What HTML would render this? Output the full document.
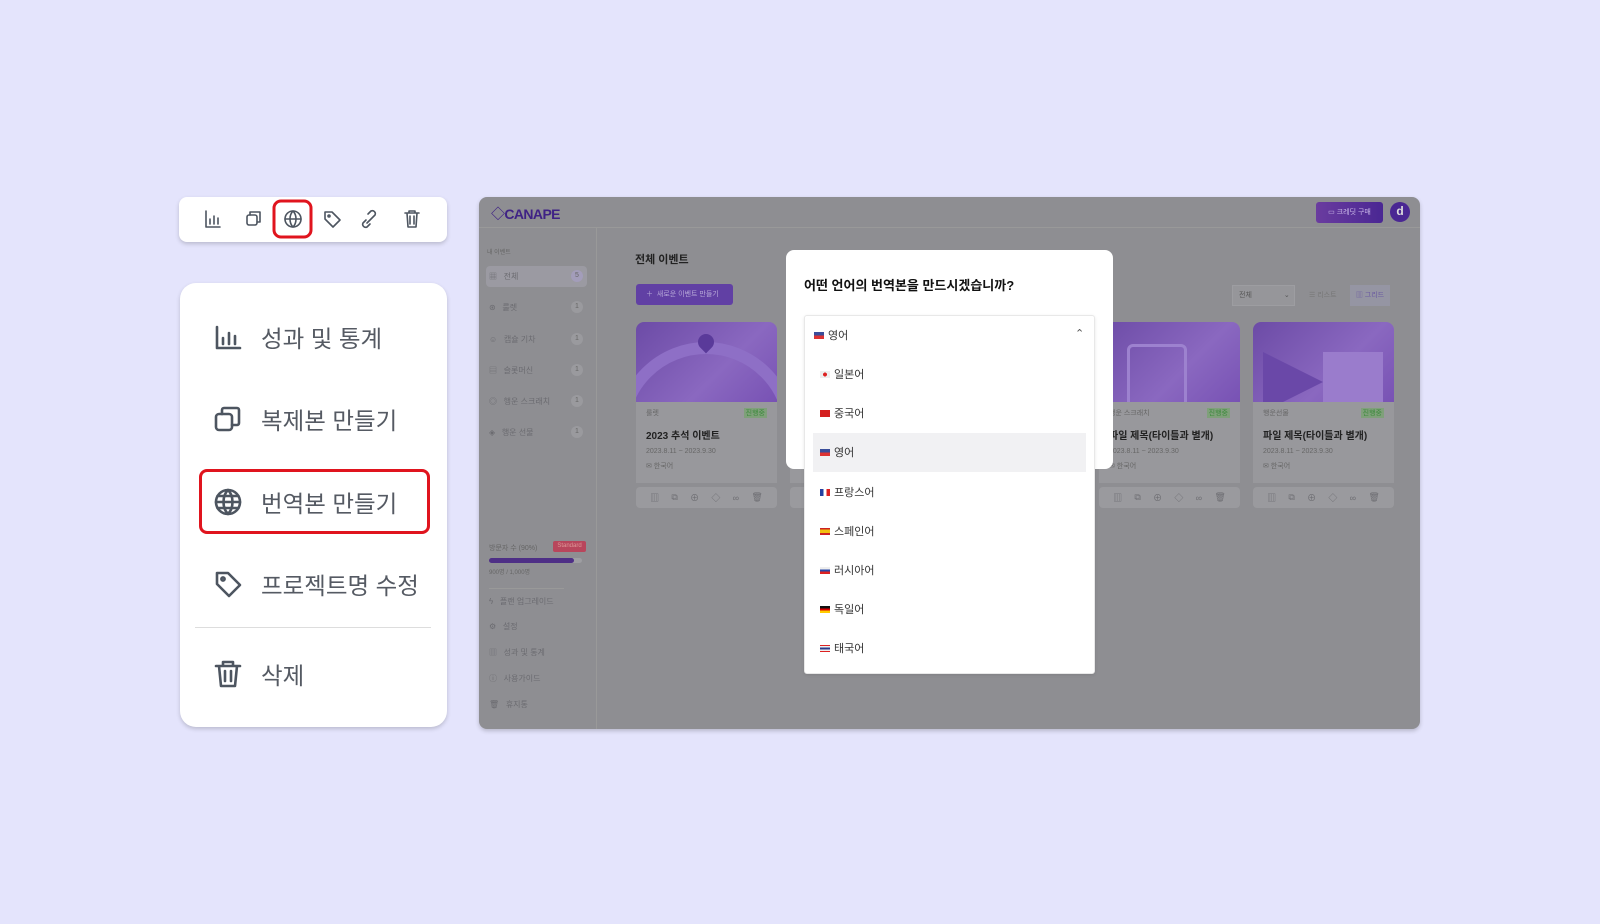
<!DOCTYPE html>
<html><head><meta charset="utf-8">
<style>
*{margin:0;padding:0;box-sizing:border-box}
body{width:1600px;height:924px;background:#e4e4fc;font-family:"Liberation Sans","Noto Sans CJK KR",sans-serif;position:relative;overflow:hidden}
.a{position:absolute}
.card{background:#fff;border-radius:8px;box-shadow:0 2px 4px rgba(0,0,0,.18)}
svg{display:block}
.mi{position:absolute;left:213px;font-size:23.5px;color:#555a63;display:flex;align-items:center}
.mi svg{margin-right:18px}
.st{stroke:#4d5560;fill:none;stroke-width:2.2;stroke-linecap:round;stroke-linejoin:round}
.sb{position:absolute;left:489px;font-size:8px;color:#6b6b70;display:flex;align-items:center}
.cnt{position:absolute;left:571px;width:12px;height:12px;border-radius:6px;background:#9a9a9e;font-size:7px;color:#666;text-align:center;line-height:12px}
.flag{display:inline-block;width:10px;height:7px;margin-right:4px;vertical-align:middle}
.opt{position:absolute;left:820px;font-size:11px;color:#333;display:flex;align-items:center}
.ev{position:absolute;width:141px;top:322px;height:186px}
.ev .img{height:80px;border-radius:8px 8px 0 0;background:linear-gradient(135deg,#6c4ba6,#8a68c0 60%,#7852b4);position:relative;overflow:hidden}
.ev .info{height:81px;background:#98989c;padding:6px 10px;font-size:7px;color:#666}
.ev .bar{margin-top:4px;height:21px;background:#9a9a9e;border-radius:4px;font-size:9px;color:#6d6d72;display:flex;justify-content:space-around;align-items:center;padding:0 8px}
</style></head><body>

<!-- small toolbar -->
<div class="a card" style="left:179px;top:197px;width:268px;height:45px"></div>
<svg class="a" style="left:179px;top:197px" width="268" height="45" viewBox="0 0 268 45">
 <g class="st" style="stroke-width:1.6">
  <path d="M27 14v16h14M31 27v-5M35 27v-8M39 27v-6"/>
  <rect x="68" y="18" width="10" height="10" rx="2"/><path d="M71 18v-3h10v10h-3"/>
  <circle cx="114" cy="22" r="8"/><path d="M106 22h16M114 14c-4 4-4 12 0 16M114 14c4 4 4 12 0 16"/>
  <path d="M146 15h7l8 8-7 7-8-8z"/><circle cx="150" cy="19" r="1"/>
  <path d="M187 23l-3 3a3 3 0 004 4l3-3M193 21l3-3a3 3 0 00-4-4l-3 3M188 26l6-6"/>
  <path d="M226 16h14M230 16v-2h6v2M228 16l1 14h8l1-14M231 19v8M235 19v8"/>
 </g>
 <rect x="95" y="4" width="37" height="36" rx="7" fill="none" stroke="#e0141e" stroke-width="3"/>
</svg>

<!-- big menu -->
<div class="a card" style="left:180px;top:283px;width:267px;height:444px;border-radius:16px"></div>
<div class="mi" style="top:320px"><svg width="30" height="30" viewBox="0 0 30 30"><g class="st" style="stroke-width:2.6"><path d="M4 5v21h23M10 22v-6M16 22v-11M22 22v-8"/></g></svg>성과 및 통계</div>
<div class="mi" style="top:402px"><svg width="30" height="30" viewBox="0 0 30 30"><g class="st" style="stroke-width:2.6"><rect x="3" y="10" width="16" height="16" rx="3"/><path d="M9 10V6a2 2 0 012-2h13a2 2 0 012 2v13a2 2 0 01-2 2h-5"/></g></svg>복제본 만들기</div>
<div class="mi" style="top:485px"><svg width="30" height="30" viewBox="0 0 30 30"><g class="st" style="stroke-width:2.6"><circle cx="15" cy="15" r="12"/><path d="M3 15h24M4.5 9h21M4.5 21h21M15 3c-6 6-6 18 0 24M15 3c6 6 6 18 0 24"/></g></svg>번역본 만들기</div>
<div class="mi" style="top:567px"><svg width="30" height="30" viewBox="0 0 30 30"><g class="st" style="stroke-width:2.6"><path d="M4 4h11l12 12-11 11L4 15z"/><circle cx="10" cy="10" r="1.6"/></g></svg>프로젝트명 수정</div>
<div class="a" style="left:195px;top:627px;width:236px;height:1px;background:#ddd"></div>
<div class="mi" style="top:657px"><svg width="30" height="30" viewBox="0 0 30 30"><g class="st" style="stroke-width:2.6"><path d="M3 7h24M10 7V3h10v4M6 7l2 20h14l2-20M12 12v10M18 12v10"/></g></svg>삭제</div>
<div class="a" style="left:199px;top:469px;width:231px;height:65px;border:3px solid #e0141e;border-radius:8px"></div>

<!-- app panel -->
<div class="a" style="left:479px;top:197px;width:941px;height:532px;background:#8e8e92;border-radius:8px;overflow:hidden;box-shadow:0 2px 4px rgba(0,0,0,.2)">
 <div class="a" style="left:0;top:0;width:941px;height:31px;border-bottom:1px solid #999"></div>
 <div class="a" style="left:12px;top:7px;font-size:14px;font-weight:bold;color:#3f2285;letter-spacing:-0.6px">◇CANAPE</div>
 <div class="a" style="left:837px;top:5px;width:67px;height:21px;border-radius:3px;background:linear-gradient(90deg,#6a3c9f,#4a2793);color:#c9b8e8;font-size:7px;line-height:21px;text-align:center">▭ 크레딧 구매</div>
 <div class="a" style="left:911px;top:5px;width:20px;height:20px;border-radius:10px;background:#4a2793;color:#ddd;font-size:12px;font-weight:bold;text-align:center;line-height:19px">d</div>
 <div class="a" style="left:117px;top:31px;width:1px;height:501px;background:#999"></div>
</div>
<!-- sidebar -->
<div class="a" style="left:487px;top:247px;font-size:6px;color:#666">내 이벤트</div>
<div class="a" style="left:486px;top:266px;width:101px;height:21px;background:#9b9aa2;border-radius:4px"></div>
<div class="sb" style="top:271px">▦&nbsp;&nbsp;&nbsp;전체</div><div class="cnt" style="top:270px;background:#a39dba">5</div>
<div class="sb" style="top:302px">⊛&nbsp;&nbsp;&nbsp;룰렛</div><div class="cnt" style="top:301px">1</div>
<div class="sb" style="top:334px">☺&nbsp;&nbsp;&nbsp;캡슐 기차</div><div class="cnt" style="top:333px">1</div>
<div class="sb" style="top:365px">▤&nbsp;&nbsp;&nbsp;슬롯머신</div><div class="cnt" style="top:364px">1</div>
<div class="sb" style="top:396px">◎&nbsp;&nbsp;&nbsp;행운 스크래치</div><div class="cnt" style="top:395px">1</div>
<div class="sb" style="top:427px">◈&nbsp;&nbsp;&nbsp;행운 선물</div><div class="cnt" style="top:426px">1</div>
<div class="a" style="left:489px;top:543px;font-size:7px;color:#666">방문자 수 (90%)</div>
<div class="a" style="left:553px;top:541px;width:33px;height:11px;background:#b8465c;border-radius:2px;font-size:6px;color:#d99;text-align:center;line-height:11px">Standard</div>
<div class="a" style="left:489px;top:558px;width:93px;height:5px;background:#9e9ea2;border-radius:3px"><div style="width:85px;height:5px;background:#4e2f86;border-radius:3px"></div></div>
<div class="a" style="left:489px;top:567px;font-size:6px;color:#666">900명 / 1,000명</div>
<div class="a" style="left:489px;top:588px;width:75px;height:1px;background:#999"></div>
<div class="sb" style="top:596px">ϟ&nbsp;&nbsp;&nbsp;플랜 업그레이드</div>
<div class="sb" style="top:621px">⚙&nbsp;&nbsp;&nbsp;설정</div>
<div class="sb" style="top:647px">▥&nbsp;&nbsp;&nbsp;성과 및 통계</div>
<div class="sb" style="top:673px">ⓘ&nbsp;&nbsp;&nbsp;사용가이드</div>
<div class="sb" style="top:699px">🗑&nbsp;&nbsp;&nbsp;휴지통</div>

<!-- main content -->
<div class="a" style="left:635px;top:251px;font-size:11px;color:#222;font-weight:bold">전체 이벤트</div>
<div class="a" style="left:636px;top:284px;width:97px;height:21px;background:#6140a4;border-radius:3px;color:#b7a8d8;font-size:7px;line-height:21px;padding-left:10px">＋&nbsp; 새로운 이벤트 만들기</div>
<div class="a" style="left:1232px;top:285px;width:63px;height:21px;background:#96969a;border:1px solid #9d9da1;font-size:7px;color:#555;line-height:19px;padding-left:6px">전체 <span style="margin-left:30px">⌄</span></div>
<div class="a" style="left:1309px;top:290px;font-size:7px;color:#777">☰ 리스트</div>
<div class="a" style="left:1350px;top:285px;width:40px;height:21px;background:#9595a3;font-size:7px;color:#6a5aa0;line-height:21px;text-align:center">▥ 그리드</div>

<div class="ev" style="left:636px"><div class="img"><div class="a" style="left:-20px;top:20px;width:180px;height:180px;border-radius:50%;border:12px solid #8e6fc6"></div><div class="a" style="left:62px;top:12px;width:16px;height:16px;border-radius:50% 50% 50% 0;transform:rotate(-45deg);background:#5a3a9a"></div></div><div class="info">룰렛<span style="float:right;background:#7fa07a;color:#3c8a3c;padding:0 2px">진행중</span><div style="font-size:10px;color:#222;font-weight:bold;margin-top:9px">2023 추석 이벤트</div><div style="margin-top:6px">2023.8.11 ~ 2023.9.30</div><div style="margin-top:6px">✉ 한국어</div></div><div class="bar"><span>▥</span><span>⧉</span><span>⊕</span><span>◇</span><span>∞</span><span>🗑</span></div></div>
<div class="ev" style="left:790px"><div class="img"></div><div class="info"></div><div class="bar"></div></div>
<div class="ev" style="left:1099px"><div class="img"><div class="a" style="left:28px;top:22px;width:60px;height:70px;border:3px solid #9d82cf;border-radius:6px"></div></div><div class="info">행운 스크래치<span style="float:right;background:#7fa07a;color:#3c8a3c;padding:0 2px">진행중</span><div style="font-size:10px;color:#222;font-weight:bold;margin-top:9px">파일 제목(타이틀과 별개)</div><div style="margin-top:6px">2023.8.11 ~ 2023.9.30</div><div style="margin-top:6px">✉ 한국어</div></div><div class="bar"><span>▥</span><span>⧉</span><span>⊕</span><span>◇</span><span>∞</span><span>🗑</span></div></div>
<div class="ev" style="left:1253px"><div class="img"><div class="a" style="left:10px;top:30px;width:0;height:0;border-left:60px solid #6a48a8;border-top:30px solid transparent;border-bottom:30px solid transparent"></div><div class="a" style="left:70px;top:30px;width:60px;height:50px;background:#9a7ccc"></div></div><div class="info">행운선물<span style="float:right;background:#7fa07a;color:#3c8a3c;padding:0 2px">진행중</span><div style="font-size:10px;color:#222;font-weight:bold;margin-top:9px">파일 제목(타이틀과 별개)</div><div style="margin-top:6px">2023.8.11 ~ 2023.9.30</div><div style="margin-top:6px">✉ 한국어</div></div><div class="bar"><span>▥</span><span>⧉</span><span>⊕</span><span>◇</span><span>∞</span><span>🗑</span></div></div>

<!-- modal -->
<div class="a" style="left:786px;top:250px;width:327px;height:219px;background:#fff;border-radius:8px"></div>
<div class="a" style="left:804px;top:275px;font-size:13px;font-weight:bold;color:#111">어떤 언어의 번역본을 만드시겠습니까?</div>
<div class="a" style="left:804px;top:315px;width:291px;height:359px;background:#fff;border:1px solid #e8e8e8;border-radius:3px;box-shadow:0 1px 3px rgba(0,0,0,.1)"></div>
<div class="a" style="left:813px;top:433px;width:273px;height:39px;background:#f1f1f3"></div>
<div class="opt" style="left:814px;top:327px"><span class="flag" style="background:linear-gradient(#3a4d9a 50%,#d33 50%)"></span>영어</div>
<div class="a" style="left:1075px;top:327px;font-size:11px;color:#555">⌃</div>
<div class="opt" style="top:366px"><span class="flag" style="background:radial-gradient(circle,#d22 30%,#eee 35%)"></span>일본어</div>
<div class="opt" style="top:405px"><span class="flag" style="background:#d41f1f"></span>중국어</div>
<div class="opt" style="top:444px"><span class="flag" style="background:linear-gradient(#3a4d9a 50%,#d33 50%)"></span>영어</div>
<div class="opt" style="top:484px"><span class="flag" style="background:linear-gradient(90deg,#2440a0 33%,#fff 33%,#fff 66%,#d22 66%)"></span>프랑스어</div>
<div class="opt" style="top:523px"><span class="flag" style="background:linear-gradient(#c22 25%,#f2c00f 25%,#f2c00f 75%,#c22 75%)"></span>스페인어</div>
<div class="opt" style="top:562px"><span class="flag" style="background:linear-gradient(#eee 33%,#2848a8 33%,#2848a8 66%,#d22 66%)"></span>러시아어</div>
<div class="opt" style="top:601px"><span class="flag" style="background:linear-gradient(#111 33%,#d00 33%,#d00 66%,#fc0 66%)"></span>독일어</div>
<div class="opt" style="top:640px"><span class="flag" style="background:linear-gradient(#d22 16%,#eee 16%,#eee 33%,#2a3a8a 33%,#2a3a8a 66%,#eee 66%,#eee 83%,#d22 83%)"></span>태국어</div>
</body></html>
